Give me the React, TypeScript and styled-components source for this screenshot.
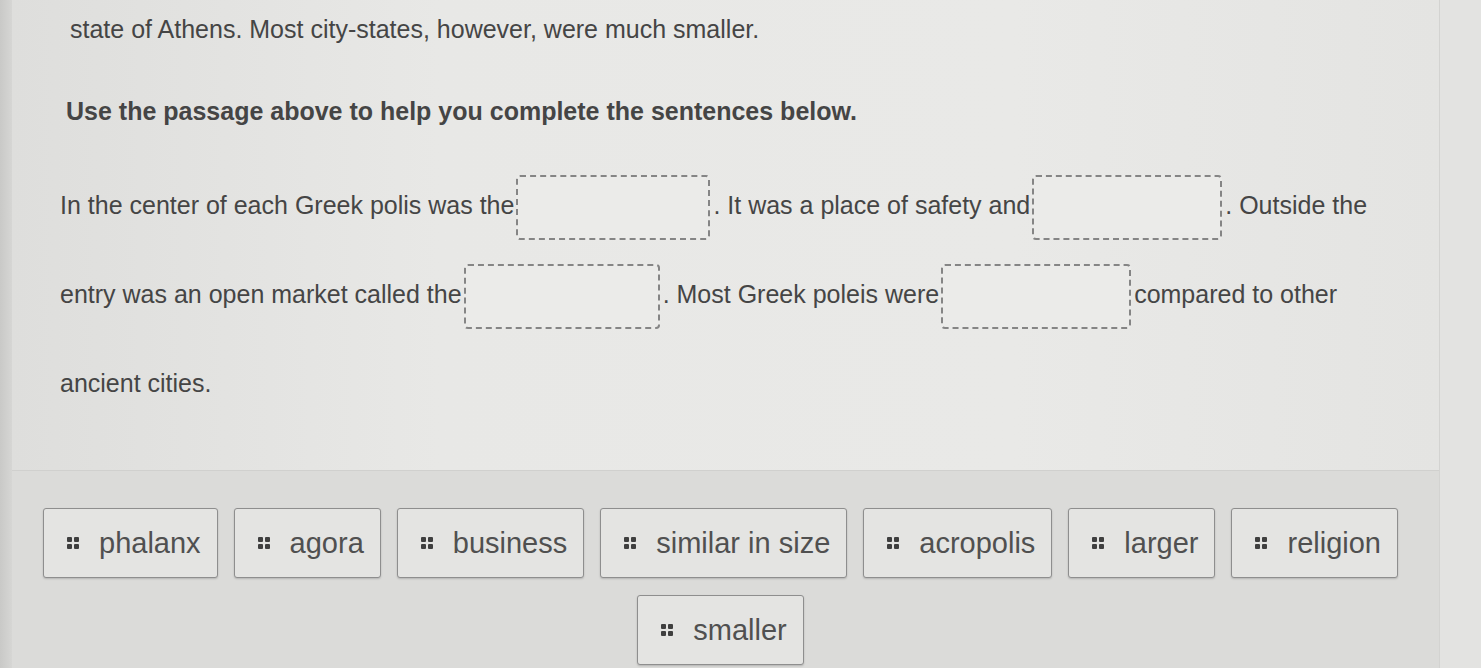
import styled, { createGlobalStyle } from 'styled-components';

const GlobalStyle = createGlobalStyle`
  html, body {
    margin: 0;
    padding: 0;
    background: #e4e4e2;
  }
  body {
    font-family: 'Liberation Sans', Arial, sans-serif;
    color: #454545;
  }
`;

type Part = { text: string } | { blank: true; width: number };

const sentence: Part[] = [
  { text: 'In the center of each Greek polis was the' },
  { blank: true, width: 194 },
  { text: '. It was a place of safety and' },
  { blank: true, width: 190 },
  { text: '. Outside the ' },
  { text: 'entry was an open market called the' },
  { blank: true, width: 196 },
  { text: '. Most Greek poleis were' },
  { blank: true, width: 190 },
  { text: 'compared to other ' },
  { text: 'ancient cities.' }
];

const words = [
  'phalanx',
  'agora',
  'business',
  'similar in size',
  'acropolis',
  'larger',
  'religion',
  'smaller'
];

const Grip = () => (
  <svg width='12' height='12' viewBox='0 0 12 12'>
    <rect x='0' y='0' width='5' height='5' rx='1' fill='#3f3f3f' />
    <rect x='7' y='0' width='5' height='5' rx='1' fill='#3f3f3f' />
    <rect x='0' y='7' width='5' height='5' rx='1' fill='#3f3f3f' />
    <rect x='7' y='7' width='5' height='5' rx='1' fill='#3f3f3f' />
  </svg>
);

const App: React.FC = () => {
  return (
    <>
      <GlobalStyle />
      <Page>
        <LeftEdge />
        <Panel>
          <Passage>
            <Intro>state of Athens. Most city-states, however, were much smaller.</Intro>
            <Prompt>Use the passage above to help you complete the sentences below.</Prompt>
            <Sentence>
              {sentence.map((p, i) =>
                'text' in p ? (
                  <span key={i}>{p.text}</span>
                ) : (
                  <DropZone key={i} $width={p.width} />
                )
              )}
            </Sentence>
          </Passage>
          <Bank>
            {words.map((w) => (
              <Chip key={w}>
                <Grip />
                <ChipLabel>{w}</ChipLabel>
              </Chip>
            ))}
          </Bank>
        </Panel>
        <RightEdge />
      </Page>
    </>
  );
};

export default App;

const Page = styled.div`
  display: flex;
  width: 1481px;
  height: 668px;
  overflow: hidden;
`;

const LeftEdge = styled.div`
  width: 12px;
  background: linear-gradient(90deg, #c9c9c7, #d6d6d4);
`;

const RightEdge = styled.div`
  width: 41px;
  background: #e3e3e1;
  border-left: 1px solid #d3d3d1;
`;

const Panel = styled.div`
  flex: 1;
  display: flex;
  flex-direction: column;
  background: linear-gradient(90deg, #dededc 0%, #e8e8e6 30%, #e9e9e7 70%, #e4e4e2 100%);
`;

const Passage = styled.div`
  height: 470px;
  box-sizing: border-box;
  padding: 14px 30px 0 46px;
  font-size: 25px;
`;

const Intro = styled.p`
  margin: 0 0 0 12px;
  line-height: 30px;
`;

const Prompt = styled.p`
  margin: 52px 0 0 8px;
  font-weight: bold;
  line-height: 30px;
`;

const Sentence = styled.p`
  margin: 35px 0 0 2px;
  line-height: 89px;

  span {
    white-space: pre-wrap;
  }
`;

const DropZone = styled.span<{ $width: number }>`
  display: inline-block;
  width: ${(p) => p.$width}px;
  height: 65px;
  margin: 0 3px 0 2px;
  vertical-align: middle;
  box-sizing: border-box;
  border: 2px dashed #858585;
  border-radius: 4px;
  background: #ebebe9;
`;

const Bank = styled.div`
  flex: 1;
  display: flex;
  flex-wrap: wrap;
  justify-content: center;
  align-content: flex-start;
  gap: 17px 16px;
  padding: 37px 26px 0 16px;
  background: #dbdbd9;
  border-top: 1px solid #d0d0ce;
`;

const Chip = styled.div`
  display: flex;
  align-items: center;
  gap: 20px;
  height: 70px;
  box-sizing: border-box;
  padding: 0 16px 0 23px;
  border: 1px solid #8e8e8e;
  border-radius: 3px;
  background: #e4e4e2;
  box-shadow: 0 1px 2px rgba(0, 0, 0, 0.18);
`;

const ChipLabel = styled.span`
  font-size: 29px;
  color: #505050;
`;
